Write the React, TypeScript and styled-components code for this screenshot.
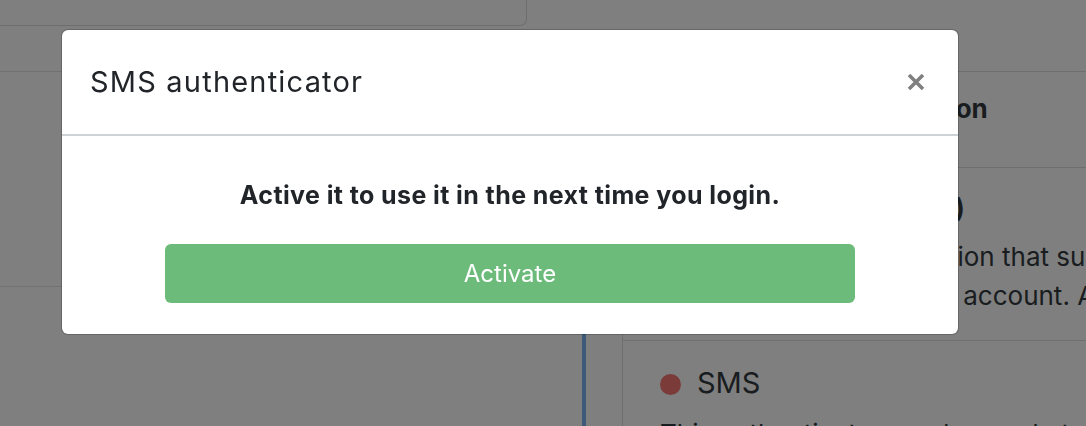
import React, { ReactElement } from 'react';
import styled, { createGlobalStyle } from 'styled-components';

const GlobalStyle = createGlobalStyle`
	html, body {
		margin: 0;
		padding: 0;
		background: #fff;
	}
	body {
		font-family: Inter, 'Noto Sans', sans-serif;
		color: #343a40;
	}
`;

const Page = styled.div`
	width: 1086px;
	height: 426px;
	overflow: hidden;
	display: flex;
	flex-direction: column;
	background: #fff;
`;

const TopCard = styled.div`
	width: 527px;
	height: 26px;
	flex-shrink: 0;
	box-sizing: border-box;
	border-right: 1px solid #dcdcdc;
	border-bottom: 1px solid #dcdcdc;
	border-bottom-right-radius: 7px;
`;

const Main = styled.div`
	display: flex;
	flex: 1;
	min-height: 0;
`;

const LeftCol = styled.div`
	width: 560px;
	flex-shrink: 0;
	padding-top: 45px;
	box-sizing: border-box;
`;

const LeftRow = styled.div`
	height: 214px;
	border-top: 1px solid #e2e2e2;
`;

const Timeline = styled.div`
	width: 4px;
	flex-shrink: 0;
	margin: 45px 36px 0 22px;
	background: #7ab4f6;
`;

const RightCol = styled.div`
	width: 760px;
	flex-shrink: 0;
	margin-top: 45px;
	border-left: 1px solid #dedede;
`;

const Item = styled.div<{ $height?: number; $top: number }>`
	box-sizing: border-box;
	${p => (p.$height ? `height: ${p.$height}px;` : '')}
	padding: ${p => p.$top}px 37px 0;
	border-top: 1px solid #dedede;
`;

const ItemTitle = styled.div`
	font-size: 26px;
	font-weight: 700;
	line-height: 31px;
	letter-spacing: -0.2px;
	white-space: nowrap;
	color: #343a40;
`;

const Method = styled.div`
	display: flex;
	align-items: center;
	gap: 16px;
	font-size: 29px;
	line-height: 35px;
	color: #343a40;
`;

const Dot = styled.span<{ $color: string }>`
	width: 21px;
	height: 21px;
	margin-top: 4px;
	border-radius: 50%;
	background: ${p => p.$color};
`;

const Desc = styled.div<{ $gap: number }>`
	margin-top: ${p => p.$gap}px;
	font-size: 26px;
	line-height: 39px;
	white-space: nowrap;
	color: #343a40;
`;

const Overlay = styled.div`
	position: fixed;
	inset: 0;
	background: rgba(0, 0, 0, 0.5);
	padding: 29px 0 0 61px;
	box-sizing: border-box;
`;

const Modal = styled.div`
	width: 898px;
	box-sizing: border-box;
	background: #fff;
	background-clip: padding-box;
	border: 1px solid rgba(0, 0, 0, 0.2);
	border-radius: 7px;
`;

const ModalHeader = styled.div`
	height: 106px;
	box-sizing: border-box;
	display: flex;
	align-items: center;
	justify-content: space-between;
	padding: 0 33px 0 28px;
	border-bottom: 2px solid #ced3d8;
`;

const ModalTitle = styled.h5`
	margin: 0;
	font-size: 29px;
	font-weight: 400;
	line-height: 34px;
	letter-spacing: 1.2px;
	color: #212529;
`;

const CloseButton = styled.button`
	display: flex;
	padding: 0;
	border: 0;
	background: transparent;
	cursor: pointer;
`;

const ModalBody = styled.div`
	padding: 44px 0 31px;
	text-align: center;
`;

const Lead = styled.p`
	margin: 0;
	font-size: 25px;
	font-weight: 700;
	line-height: 30px;
	letter-spacing: 0.4px;
	color: #212529;
`;

const ActivateButton = styled.button`
	display: block;
	width: 690px;
	height: 59px;
	margin: 34px auto 0;
	border: 0;
	border-radius: 6px;
	background: #6dbb7a;
	color: #fff;
	font-family: inherit;
	font-size: 24px;
	font-weight: 400;
	cursor: pointer;
`;

const CloseIcon = (): ReactElement => (
	<svg width="18" height="18" viewBox="0 0 18 18">
		<path d="M2 2 L16 16 M16 2 L2 16" stroke="#808080" strokeWidth="3.6" />
	</svg>
);

export default function App(): ReactElement {
	return (
		<>
			<GlobalStyle />
			<Page>
				<TopCard />
				<Main>
					<LeftCol>
						<LeftRow />
						<LeftRow />
					</LeftCol>
					<Timeline />
					<RightCol>
						<Item $height={96} $top={21}>
							<ItemTitle>Two-factor authentication</ItemTitle>
						</Item>
						<Item $height={173} $top={24}>
							<ItemTitle>Authenticator app (OTP)</ItemTitle>
							<Desc $gap={14}>
								<div>Pick any mobile application that supports TOTP codes</div>
								<div>and connect it with your account. After setup you need a code.</div>
							</Desc>
						</Item>
						<Item $top={24}>
							<Method>
								<Dot $color="#f47772" />
								SMS
							</Method>
							<Desc $gap={14}>This authenticator sends a code to your phone.</Desc>
						</Item>
					</RightCol>
				</Main>
			</Page>
			<Overlay>
				<Modal>
					<ModalHeader>
						<ModalTitle>SMS authenticator</ModalTitle>
						<CloseButton aria-label="Close">
							<CloseIcon />
						</CloseButton>
					</ModalHeader>
					<ModalBody>
						<Lead>Active it to use it in the next time you login.</Lead>
						<ActivateButton>Activate</ActivateButton>
					</ModalBody>
				</Modal>
			</Overlay>
		</>
	);
}
